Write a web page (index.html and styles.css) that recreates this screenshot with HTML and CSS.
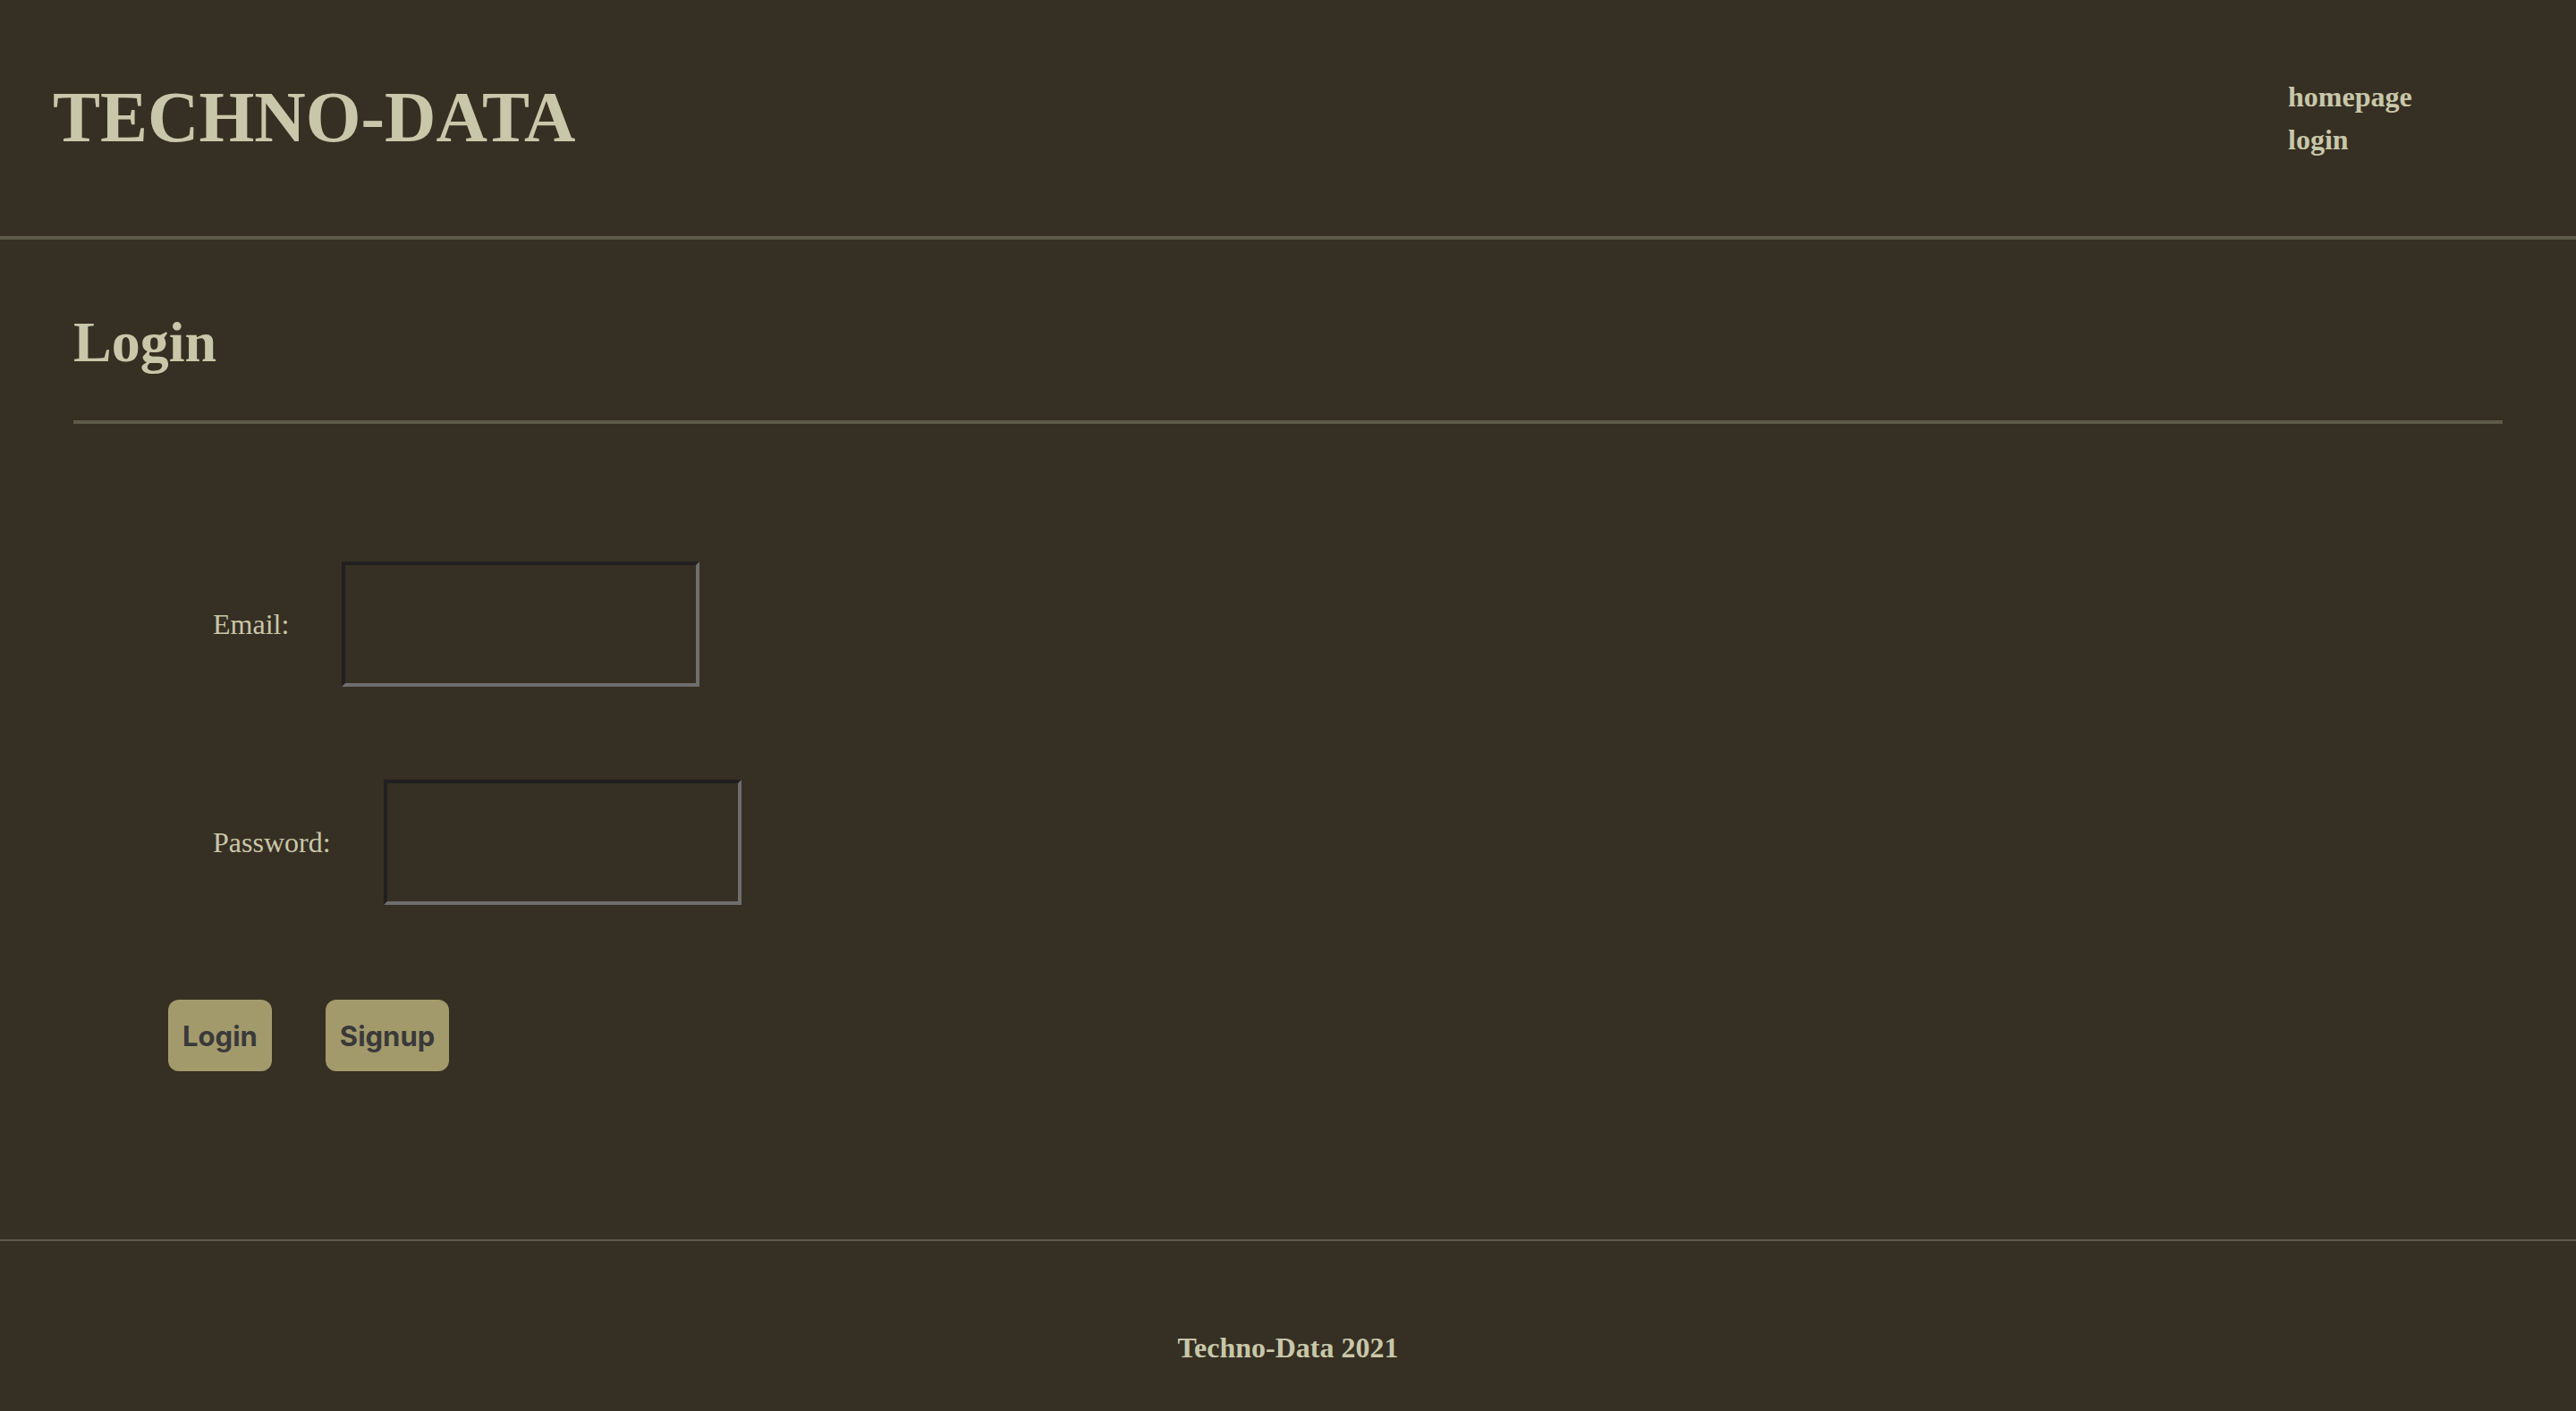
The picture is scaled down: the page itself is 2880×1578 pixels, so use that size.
FILE: index.html
```html
<!DOCTYPE html>
<html lang="en">
<head>
<meta charset="utf-8">
<title>Techno-Data - Login</title>
<link rel="stylesheet" href="styles.css">
</head>
<body>
<header class="site-header">
  <div class="brand">TECHNO-DATA</div>
  <nav class="nav">
    <a class="nav-link" href="#">homepage</a>
    <a class="nav-link" href="#">login</a>
  </nav>
</header>
<main class="main">
  <h1 class="page-title">Login</h1>
  <hr class="divider">
  <form class="login-form">
    <div class="field">
      <label class="field-label" for="email">Email:</label>
      <input class="field-input" id="email" type="text">
    </div>
    <div class="field field-password">
      <label class="field-label" for="password">Password:</label>
      <input class="field-input" id="password" type="password">
    </div>
    <div class="actions">
      <button class="btn" type="button">Login</button>
      <button class="btn" type="button">Signup</button>
    </div>
  </form>
</main>
<footer class="site-footer">
  <div class="footer-text">Techno-Data 2021</div>
</footer>
</body>
</html>
```
FILE: styles.css
```css
html, body {
  margin: 0;
  padding: 0;
}
body {
  background: #362f23;
  color: #c8c7a9;
  font-family: "Liberation Serif", "Times New Roman", serif;
  overflow: hidden;
}
.site-header {
  height: 264px;
  border-bottom: 4px solid #5e5b4b;
  display: flex;
  align-items: center;
  justify-content: space-between;
  padding: 0 59px;
}
.brand {
  font-size: 79.5px;
  font-weight: 700;
  line-height: 1;
}
.nav {
  width: 263px;
  display: flex;
  flex-direction: column;
}
.nav-link {
  color: #c8c7a9;
  text-decoration: none;
  font-size: 32px;
  font-weight: 700;
  line-height: 48px;
}
.main {
  padding: 0 82px;
}
.page-title {
  margin: 83px 0 0;
  font-size: 64px;
  font-weight: 700;
  line-height: 1;
}
.divider {
  margin: 55px 0 0;
  border: none;
  height: 4px;
  background: #5e5b4b;
}
.login-form {
  padding-top: 154px;
  padding-left: 156px;
  display: flex;
  flex-direction: column;
}
.field {
  display: flex;
  align-items: center;
  gap: 59px;
}
.field-password {
  margin-top: 104px;
}
.field-label {
  font-size: 32px;
  line-height: 1;
}
.field-input {
  box-sizing: border-box;
  width: 400px;
  height: 140px;
  margin: 0;
  padding: 0;
  background: transparent;
  border-style: solid;
  border-width: 4px;
  border-color: #202020 #6e6e6e #6e6e6e #202020;
  outline: none;
}
.actions {
  margin-top: 106px;
  margin-left: -50px;
  display: flex;
  gap: 60px;
}
.btn {
  height: 80px;
  padding: 0 16px;
  border: none;
  border-radius: 12px;
  background: #a39a6c;
  color: #3a3939;
  font-family: Inter, "Noto Sans", sans-serif;
  font-size: 31px;
  font-weight: 700;
}
.site-footer {
  margin-top: 188px;
  border-top: 2px solid #5e5b4b;
  padding: 103px 0 50px;
  text-align: center;
}
.footer-text {
  font-size: 32px;
  font-weight: 700;
  line-height: 1;
}
```
